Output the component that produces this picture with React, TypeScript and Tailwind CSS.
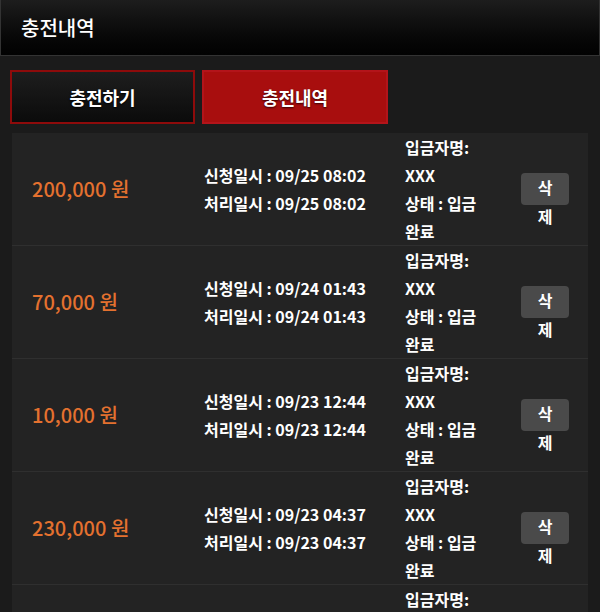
const ROWS = [
  { amount: "200,000", requested: "09/25 08:02", processed: "09/25 08:02" },
  { amount: "70,000", requested: "09/24 01:43", processed: "09/24 01:43" },
  { amount: "10,000", requested: "09/23 12:44", processed: "09/23 12:44" },
  { amount: "230,000", requested: "09/23 04:37", processed: "09/23 04:37" },
  { amount: "50,000", requested: "09/22 10:15", processed: "09/22 10:16" },
];

export default function App() {
  return (
    <div className="min-h-[612px] bg-[#1b1b1b] text-white font-['Noto_Sans_CJK_KR','Noto_Sans',sans-serif]">
      <header className="h-[56px] flex items-center pl-[20px] bg-gradient-to-b from-[#1d1d1d] to-[#020202] border-l border-r border-b border-[#333]">
        <h1 className="text-[20px] font-medium leading-none">충전내역</h1>
      </header>

      <div className="flex gap-[7px] pl-[10px] pt-[14px]">
        <button className="w-[185px] h-[54px] border-2 border-[#8e0b0b] bg-gradient-to-b from-[#1e1e1e] to-[#0b0b0b] text-[18px] font-bold [text-shadow:0_1px_2px_#000]">
          충전하기
        </button>
        <button className="w-[186px] h-[54px] border-2 border-[#b3141a] bg-[#a80e0e] text-[18px] font-bold [text-shadow:0_1px_2px_#300]">
          충전내역
        </button>
      </div>

      <div className="mx-[12px] mt-[9px]">
        {ROWS.map((r, i) => (
          <div key={i} className="flex items-center bg-[#232323] border-b border-[#2f2f2f] text-[16px] font-bold leading-[28px]">
            <div className="w-[192px] pl-[20px] text-[20px] text-[#e4712f] font-medium">
              {r.amount} 원
            </div>
            <div className="w-[201px]">
              <div>신청일시 : {r.requested}</div>
              <div>처리일시 : {r.processed}</div>
            </div>
            <div className="w-[84px]">
              <div>입금자명: XXX</div>
              <div>상태 : 입금 완료</div>
            </div>
            <div className="flex-1 flex justify-end pr-[19px]">
              <button className="w-[48px] h-[32px] px-[11px] rounded-[4px] bg-[#4a4a4a] text-[16px] font-bold leading-[29px] flex items-start justify-center self-start">
                삭제
              </button>
            </div>
          </div>
        ))}
      </div>
    </div>
  );
}
